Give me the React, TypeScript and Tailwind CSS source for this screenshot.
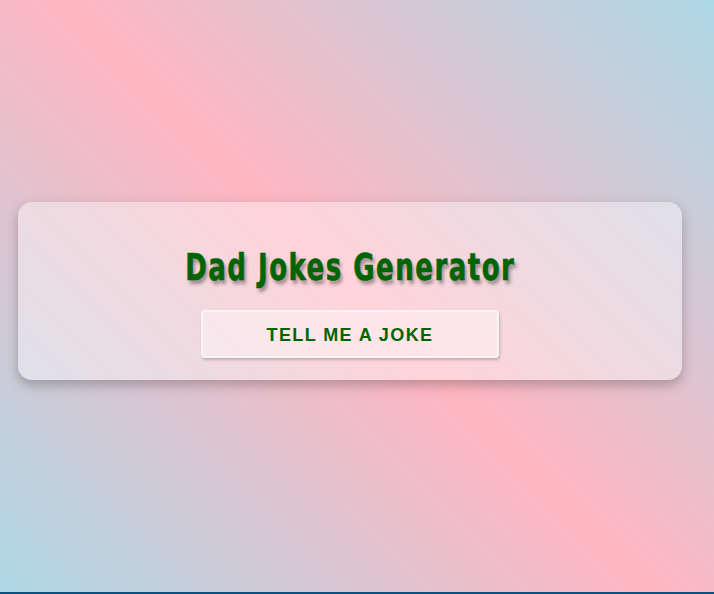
export default function App() {
  return (
    <div className="flex h-[594px] w-full flex-col overflow-hidden bg-[linear-gradient(45deg,#add8e6,#ffb6c1,#add8e6)]">
      <div className="flex-1">
        <div className="ml-[18px] mt-[202px] flex h-[178px] w-[664px] flex-col items-center rounded-[14px] bg-white/40 pt-[45px] shadow-[0_5px_12px_rgba(0,0,0,0.25)]">
          <h1 className="inline-block scale-x-[0.76] whitespace-nowrap text-[38px] font-bold leading-[40px] tracking-[2px] text-[#006400] [font-family:'DejaVu_Sans_Condensed',sans-serif] [-webkit-text-stroke:0.6px_#006400] [text-shadow:3px_4px_4px_rgba(0,0,0,0.35)]">
            Dad Jokes Generator
          </h1>
          <button className="mt-[23px] h-[48px] w-[298px] rounded-[4px] border-2 border-white/50 bg-white/40 pt-[3px] text-[18px] font-bold tracking-[1.4px] text-[#006400] shadow-[1px_2px_3px_rgba(0,0,0,0.2)] [font-family:'Liberation_Sans',Arial,sans-serif]">
            TELL ME A JOKE
          </button>
        </div>
      </div>
      <div className="h-[2px] w-full bg-[#0b4f7e]" />
    </div>
  );
}
